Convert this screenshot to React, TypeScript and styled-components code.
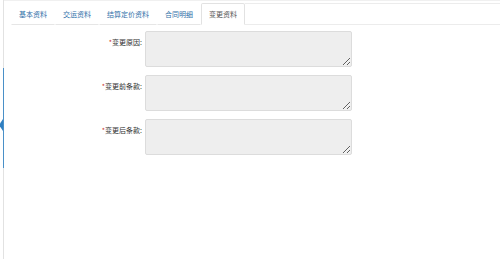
import React from "react";
import styled, { createGlobalStyle } from "styled-components";

const Global = createGlobalStyle`
  html, body { margin: 0; padding: 0; background: #fff; }
  body { font-family: "Noto Sans CJK SC", "Noto Sans", sans-serif; }
`;

const Page = styled.div`
  display: flex;
  width: 500px;
  height: 259px;
  overflow: hidden;
  background: #fff;
`;

const Rail = styled.div`
  display: flex;
  flex-direction: column;
  width: 4px;
  flex: none;
`;

const RailSeg = styled.div<{ $h?: number; $active?: boolean }>`
  position: relative;
  height: ${(p) => (p.$h ? `${p.$h}px` : "auto")};
  flex: ${(p) => (p.$h ? "none" : "1")};
  border-right: 1px solid ${(p) => (p.$active ? "#4a90c8" : "#e2e2e2")};
  ${(p) =>
    p.$active
      ? `&::after {
    content: "";
    position: absolute;
    right: 0;
    top: 51px;
    border-top: 6px solid transparent;
    border-bottom: 6px solid transparent;
    border-right: 4px solid #2f7fc1;
  }`
      : ""}
`;

const Main = styled.div`
  flex: 1;
  display: flex;
  flex-direction: column;
  padding-top: 2px;
  border-top: 1px solid #f0f0f0;
`;

const TabStrip = styled.div`
  display: flex;
  align-items: flex-end;
  height: 22px;
  padding-left: 7px;
`;

const Tab = styled.div<{ $active?: boolean }>`
  box-sizing: border-box;
  height: 22px;
  padding: 0 7px;
  display: flex;
  align-items: center;
  font-size: 7px;
  color: ${(p) => (p.$active ? "#555" : "#2f6fa8")};
  background: #fff;
  border: 1px solid ${(p) => (p.$active ? "#e2e2e2" : "transparent")};
  border-bottom: 1px solid ${(p) => (p.$active ? "transparent" : "#e6e6e6")};
  border-radius: 2px 2px 0 0;
`;

const TabFill = styled.div`
  flex: 1;
  box-sizing: border-box;
  height: 22px;
  border: 1px solid #ececec;
  border-left: none;
  border-right: none;
`;

const Form = styled.div`
  display: flex;
  flex-direction: column;
  gap: 8px;
  padding-top: 6px;
`;

const Row = styled.div`
  display: flex;
  align-items: flex-start;
`;

const Label = styled.label`
  width: 138px;
  flex: none;
  text-align: right;
  padding-top: 6px;
  padding-right: 3px;
  font-size: 7px;
  color: #333;
  white-space: nowrap;
`;

const Star = styled.span`
  color: #c9302c;
`;

const Area = styled.textarea`
  box-sizing: border-box;
  width: 207px;
  height: 36px;
  margin: 0;
  background: #eeeeee;
  border: 1px solid #dcdcdc;
  border-radius: 2px;
  font-size: 7px;
  outline: none;
`;

const fields = ["变更原因:", "变更前条款:", "变更后条款:"];
const tabs = ["基本资料", "交运资料", "结算定价资料", "合同明细", "变更资料"];

export default function App() {
  return (
    <Page>
      <Global />
      <Rail>
        <RailSeg $h={68} />
        <RailSeg $h={100} $active />
        <RailSeg />
      </Rail>
      <Main>
        <TabStrip>
          {tabs.map((t, i) => (
            <Tab key={t} $active={i === tabs.length - 1}>
              {t}
            </Tab>
          ))}
          <TabFill />
        </TabStrip>
        <Form>
          {fields.map((f) => (
            <Row key={f}>
              <Label>
                <Star>*</Star>
                {f}
              </Label>
              <Area readOnly />
            </Row>
          ))}
        </Form>
      </Main>
    </Page>
  );
}
